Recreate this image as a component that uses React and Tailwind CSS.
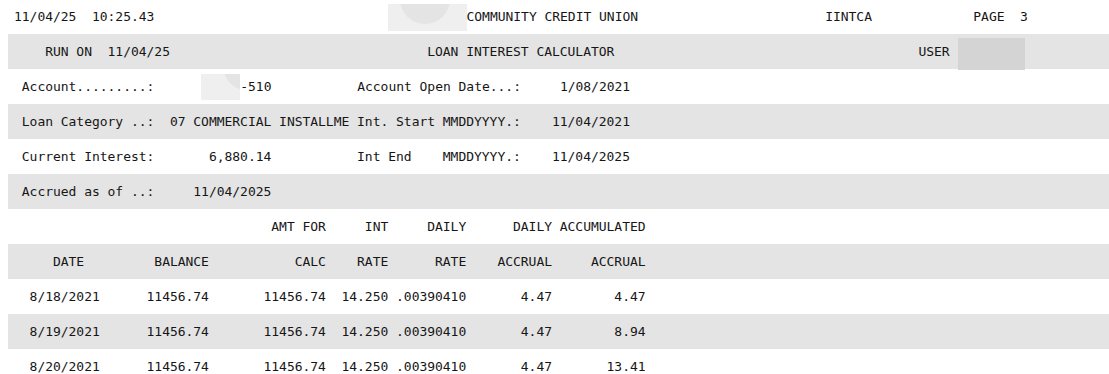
import React from 'react';

// places text pieces at fixed monospace columns, like the printed report
const Line = ({ parts }) => {
  let cur = 0;
  const out = [];
  parts.forEach(([col, item, w], i) => {
    const pad = Math.max(col - cur, 0);
    if (pad) out.push(<React.Fragment key={`p${i}`}>{' '.repeat(pad)}</React.Fragment>);
    out.push(<React.Fragment key={`t${i}`}>{item}</React.Fragment>);
    cur = col + (typeof item === 'string' ? item.length : w || 0);
  });
  return <span className="whitespace-pre">{out}</span>;
};

const Row = ({ gray, first, children }) => (
  <div
    className={`flex items-center pl-[6px] ${first ? 'h-[34px]' : 'h-[35px]'} ${
      gray ? 'bg-[#e4e4e4]' : ''
    }`}
  >
    {children}
  </div>
);

const rows = [
  ['8/18/2021', '4.47'],
  ['8/19/2021', '8.94'],
  ['8/20/2021', '13.41'],
];

export default function App() {
  return (
    <div
      className="bg-white text-[#161616] text-[13px] tracking-[-0.03px] pl-2"
      style={{ fontFamily: '"DejaVu Sans Mono", "Liberation Mono", monospace' }}
    >
      <Row first>
        <Line
          parts={[
            [0, '11/04/25  10:25.43'],
            [
              48,
              <span className="inline-block align-middle w-[10ch] h-[27px] bg-[#efefef] relative overflow-hidden">
                <span className="absolute left-[12px] top-[-30px] w-[50px] h-[50px] rounded-full bg-[#e4e4e4]" />
              </span>,
              10,
            ],
            [58, 'COMMUNITY CREDIT UNION'],
            [104, 'IINTCA'],
            [123, 'PAGE  3'],
          ]}
        />
      </Row>
      <Row gray>
        <Line
          parts={[
            [4, 'RUN ON  11/04/25'],
            [53, 'LOAN INTEREST CALCULATOR'],
            [116, 'USER'],
          ]}
        />
        <span className="ml-[8px] mt-[4px] inline-block w-[67px] h-[32px] bg-[#d4d4d4]" />
      </Row>
      <Row>
        <Line
          parts={[
            [1, 'Account.........:'],
            [
              24,
              <span className="inline-block align-middle w-[5ch] h-[26px] bg-[#efefef] relative overflow-hidden">
                <span className="absolute right-[-6px] top-[-10px] w-[22px] h-[26px] rounded-bl-full bg-[#e4e4e4]" />
              </span>,
              5,
            ],
            [29, '-510'],
            [44, 'Account Open Date...:'],
            [70, '1/08/2021'],
          ]}
        />
      </Row>
      <Row gray>
        <Line
          parts={[
            [1, 'Loan Category ..:'],
            [20, '07 COMMERCIAL INSTALLME Int. Start MMDDYYYY.:'],
            [69, '11/04/2021'],
          ]}
        />
      </Row>
      <Row>
        <Line
          parts={[
            [1, 'Current Interest:'],
            [25, '6,880.14'],
            [44, 'Int End    MMDDYYYY.:'],
            [69, '11/04/2025'],
          ]}
        />
      </Row>
      <Row gray>
        <Line parts={[[1, 'Accrued as of ..:'], [23, '11/04/2025']]} />
      </Row>
      <Row>
        <Line
          parts={[
            [33, 'AMT FOR'],
            [45, 'INT'],
            [53, 'DAILY'],
            [64, 'DAILY ACCUMULATED'],
          ]}
        />
      </Row>
      <Row gray>
        <Line
          parts={[
            [5, 'DATE'],
            [18, 'BALANCE'],
            [36, 'CALC'],
            [44, 'RATE'],
            [54, 'RATE'],
            [62, 'ACCRUAL'],
            [74, 'ACCRUAL'],
          ]}
        />
      </Row>
      {rows.map(([date, acc], i) => (
        <Row key={date} gray={i % 2 === 1}>
          <Line
            parts={[
              [2, date],
              [17, '11456.74'],
              [32, '11456.74'],
              [42, '14.250'],
              [49, '.00390410'],
              [65, '4.47'],
              [81 - acc.length, acc],
            ]}
          />
        </Row>
      ))}
    </div>
  );
}
